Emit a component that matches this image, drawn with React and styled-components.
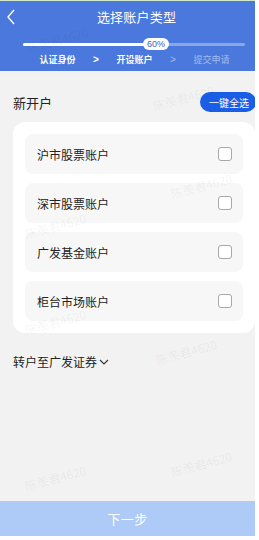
import React from "react";
import styled, { createGlobalStyle } from "styled-components";

const GlobalStyle = createGlobalStyle`
  html, body {
    margin: 0;
    padding: 0;
    background: #ffffff;
  }
  body {
    font-family: "Noto Sans CJK SC", "Noto Sans", sans-serif;
  }
`;

const Screen = styled.div`
  position: relative;
  width: 255px;
  height: 535px;
  border-top: 1px solid #cfe8c8;
  background: #f2f2f2;
  display: flex;
  flex-direction: column;
  overflow: hidden;
`;

const Header = styled.div`
  background: #4a78dc;
  height: 70px;
  display: flex;
  flex-direction: column;
  align-items: stretch;
  flex-shrink: 0;
`;

const TitleRow = styled.div`
  position: relative;
  height: 30px;
  padding-left: 18px;
  display: flex;
  align-items: center;
  justify-content: center;
`;

const Title = styled.div`
  color: #ffffff;
  font-size: 13px;
  letter-spacing: 0.2px;
`;

const Back = styled.svg`
  position: absolute;
  left: 6px;
  top: 8px;
`;

const ProgressRow = styled.div`
  position: relative;
  height: 14px;
  margin: 6px 10px 0 23px;
  display: flex;
  align-items: center;
`;

const Track = styled.div`
  width: 100%;
  height: 3px;
  border-radius: 2px;
  background: rgba(255, 255, 255, 0.35);
`;

const Fill = styled.div`
  height: 100%;
  border-radius: 2px;
  background: #ffffff;
`;

const Pill = styled.div`
  position: absolute;
  top: 1px;
  left: 120px;
  width: 26px;
  height: 12px;
  border-radius: 7px;
  background: #ffffff;
  color: #3d62b8;
  font-size: 9px;
  line-height: 12px;
  text-align: center;
  font-family: "Liberation Sans", sans-serif;
`;

const Steps = styled.div`
  display: flex;
  align-items: center;
  justify-content: center;
  padding-left: 14px;
  margin-top: 2px;
  font-size: 9px;
`;

const Step = styled.span`
  color: ${(p) => (p.$muted ? "rgba(255,255,255,0.5)" : "#ffffff")};
  font-weight: ${(p) => (p.$muted ? 400 : 700)};
`;

const Arrow = styled.span`
  color: ${(p) => (p.$muted ? "rgba(255,255,255,0.5)" : "#ffffff")};
  font-family: "Liberation Sans", sans-serif;
  font-weight: ${(p) => (p.$muted ? 400 : 700)};
  font-size: 10px;
  width: 41px;
  text-align: center;
`;

const Body = styled.div`
  flex: 1;
  padding: 20px 0 0 13px;
  display: flex;
  flex-direction: column;
`;

const SectionHead = styled.div`
  display: flex;
  align-items: center;
  justify-content: space-between;
  height: 22px;
`;

const SectionTitle = styled.div`
  font-size: 13px;
  color: #222222;
`;

const SelectAll = styled.button`
  border: none;
  background: #1b5ee6;
  color: #ffffff;
  font-size: 10px;
  font-family: "Noto Sans CJK SC", sans-serif;
  height: 20px;
  width: 56px;
  padding: 0 0 0 2px;
  border-radius: 10px;
  margin-right: -1px;
`;

const Card = styled.div`
  margin-top: 9px;
  background: #ffffff;
  border-radius: 12px;
  padding: 12px;
  display: flex;
  flex-direction: column;
  gap: 9px;
`;

const Row = styled.div`
  height: 40px;
  border-radius: 8px;
  background: #f7f7f7;
  display: flex;
  align-items: center;
  justify-content: space-between;
  padding: 0 11px 0 12px;
`;

const RowLabel = styled.span`
  font-size: 12px;
  color: #222222;
`;

const Check = styled.span`
  width: 12px;
  height: 12px;
  border: 1px solid #a8a8a8;
  border-radius: 3px;
  background: #ffffff;
`;

const Transfer = styled.div`
  margin-top: 20px;
  display: flex;
  align-items: center;
  gap: 2px;
  font-size: 12px;
  color: #222222;
`;

const Footer = styled.button`
  height: 35px;
  border: none;
  background: #aecbf8;
  color: #ffffff;
  font-size: 13px;
  font-family: "Noto Sans CJK SC", sans-serif;
  flex-shrink: 0;
  letter-spacing: 0.5px;
`;

const Watermark = styled.div`
  position: absolute;
  font-size: 12px;
  color: rgba(0, 0, 0, 0.06);
  transform: rotate(-15deg);
  white-space: nowrap;
  pointer-events: none;
`;

const accounts = ["沪市股票账户", "深市股票账户", "广发基金账户", "柜台市场账户"];

const marks = [
  [26, 30],
  [152, 88],
  [170, 176],
  [24, 216],
  [24, 312],
  [155, 342],
  [170, 454],
  [24, 468],
];

export default function App() {
  return (
    <>
      <GlobalStyle />
      <Screen>
        <Header>
          <TitleRow>
            <Back width="10" height="16" viewBox="0 0 10 16">
              <path d="M8 1 L2 8 L8 15" fill="none" stroke="#ffffff" strokeWidth="1.4" />
            </Back>
            <Title>选择账户类型</Title>
          </TitleRow>
          <ProgressRow>
            <Track>
              <Fill style={{ width: "60%" }} />
            </Track>
            <Pill>60%</Pill>
          </ProgressRow>
          <Steps>
            <Step>认证身份</Step>
            <Arrow>&gt;</Arrow>
            <Step>开设账户</Step>
            <Arrow $muted>&gt;</Arrow>
            <Step $muted>提交申请</Step>
          </Steps>
        </Header>
        <Body>
          <SectionHead>
            <SectionTitle>新开户</SectionTitle>
            <SelectAll>一键全选</SelectAll>
          </SectionHead>
          <Card>
            {accounts.map((a) => (
              <Row key={a}>
                <RowLabel>{a}</RowLabel>
                <Check />
              </Row>
            ))}
          </Card>
          <Transfer>
            转户至广发证券
            <svg width="10" height="8" viewBox="0 0 10 8">
              <path d="M1 2 L5 6 L9 2" fill="none" stroke="#333" strokeWidth="1.1" />
            </svg>
          </Transfer>
        </Body>
        <Footer>下一步</Footer>
        {marks.map(([x, y], i) => (
          <Watermark key={i} style={{ left: x, top: y }}>
            陈羡君4620
          </Watermark>
        ))}
      </Screen>
    </>
  );
}
